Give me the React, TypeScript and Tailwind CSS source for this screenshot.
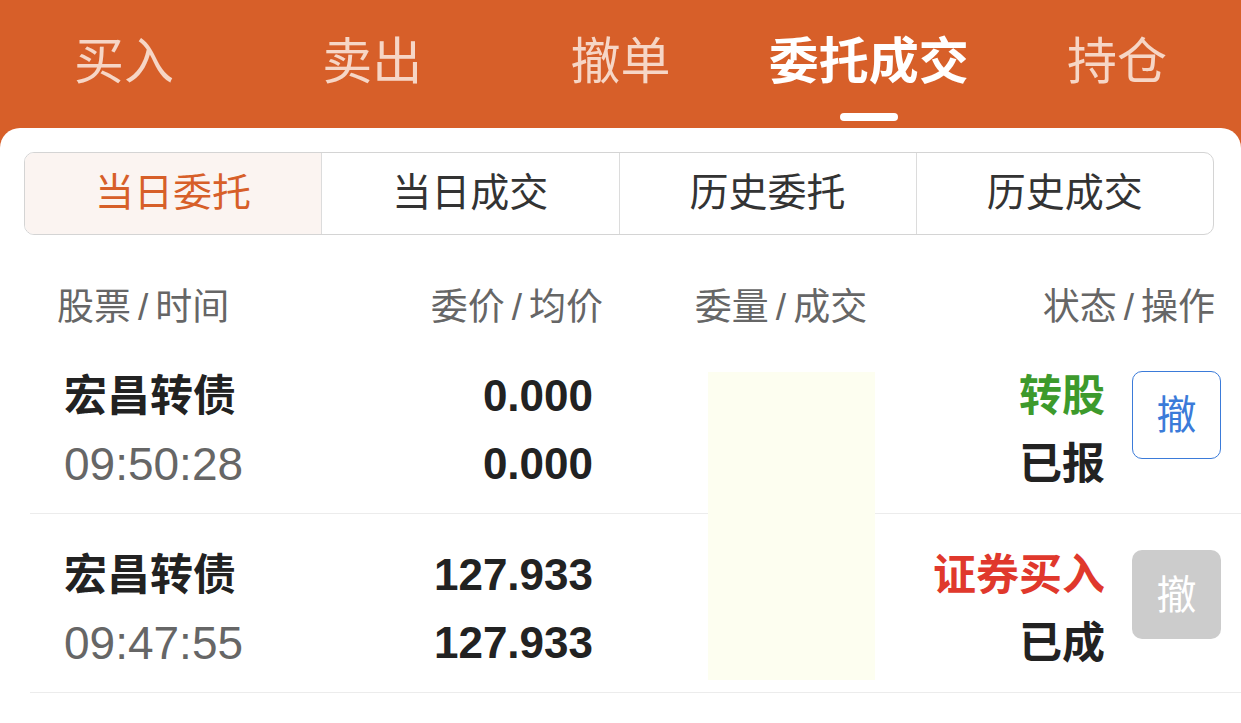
import React from 'react';

const topTabs = ['买入', '卖出', '撤单', '委托成交', '持仓'];
const subTabs = ['当日委托', '当日成交', '历史委托', '历史成交'];

interface Order {
    name: string;
    time: string;
    price: string;
    avg: string;
    kind: string;
    kindColor: string;
    status: string;
    cancellable: boolean;
}

const orders: Order[] = [
    { name: '宏昌转债', time: '09:50:28', price: '0.000', avg: '0.000', kind: '转股', kindColor: 'text-[#3d9a2c]', status: '已报', cancellable: true },
    { name: '宏昌转债', time: '09:47:55', price: '127.933', avg: '127.933', kind: '证券买入', kindColor: 'text-[#e0382c]', status: '已成', cancellable: false },
];

function Heading({ a, b }: { a: string; b: string }) {
    return (
        <>
            {a}
            <span className="mx-[7px]">/</span>
            {b}
        </>
    );
}

function OrderRow({ order }: { order: Order }) {
    return (
        <div className="flex h-[179px] border-b border-[#ececec] pl-[34px] pr-[20px]">
            <div className="w-[260px] pt-[27px]">
                <div className="h-[68px] leading-[68px] text-[43px] font-bold text-[#222]">{order.name}</div>
                <div className="h-[68px] leading-[68px] text-[46px] text-[#666]">{order.time}</div>
            </div>
            <div className="w-[269px] pt-[27px] text-right font-bold text-[#222]">
                <div className="h-[68px] leading-[68px] text-[44px]">{order.price}</div>
                <div className="h-[68px] leading-[68px] text-[44px]">{order.avg}</div>
            </div>
            <div className="flex-1 pt-[27px] text-right font-bold">
                <div className={`h-[68px] leading-[68px] text-[43px] ${order.kindColor}`}>{order.kind}</div>
                <div className="h-[68px] leading-[68px] text-[43px] text-[#222]">{order.status}</div>
            </div>
            <div className="ml-[27px] pt-[36px]">
                {order.cancellable ? (
                    <button className="flex h-[88px] w-[89px] items-center justify-center rounded-[10px] border-[1.5px] border-[#3b7bd9] text-[40px] text-[#3b7bd9]">
                        撤
                    </button>
                ) : (
                    <button className="flex h-[89px] w-[89px] items-center justify-center rounded-[10px] bg-[#cccccc] text-[40px] text-white">
                        撤
                    </button>
                )}
            </div>
        </div>
    );
}

export default function App() {
    return (
        <div className="h-[723px] w-[1241px] overflow-hidden bg-[#d75f29] font-['Liberation_Sans','Noto_Sans_CJK_SC',sans-serif]">
            {/* Top tabs */}
            <div className="flex h-[128px]">
                {topTabs.map((t, i) => {
                    const active = i === 3;
                    return (
                        <div key={t} className="flex flex-1 flex-col items-center">
                            <div className={`mt-[32px] h-[60px] leading-[60px] text-[50px] ${active ? 'font-bold text-white' : 'text-[#f6d6c6]'}`}>
                                {t}
                            </div>
                            {active && <div className="mt-[21px] h-[8px] w-[58px] rounded-full bg-white" />}
                        </div>
                    );
                })}
            </div>

            {/* Panel */}
            <div className="h-[595px] rounded-t-[20px] bg-white pt-[24px]">
                <div className="ml-[24px] mr-[27px] flex h-[83px] overflow-hidden rounded-[10px] border border-[#d4d4d4]">
                    {subTabs.map((t, i) => (
                        <div
                            key={t}
                            className={`flex flex-1 items-center justify-center text-[39px] ${i > 0 ? 'border-l border-[#dcdcdc]' : ''} ${i === 0 ? 'bg-[#fbf4f1] text-[#d75f29]' : 'text-[#333]'}`}
                        >
                            {t}
                        </div>
                    ))}
                </div>

                {/* Column headings */}
                <div className="mt-[44px] flex h-[58px] items-center text-[37px] text-[#666]">
                    <div className="w-[300px] pl-[57px]"><Heading a="股票" b="时间" /></div>
                    <div className="w-[303px] text-right"><Heading a="委价" b="均价" /></div>
                    <div className="w-[356px] text-center"><Heading a="委量" b="成交" /></div>
                    <div className="flex-1 pr-[26px] text-right"><Heading a="状态" b="操作" /></div>
                </div>

                {/* Orders */}
                <div className="relative -mt-[2px] ml-[30px]">
                    {orders.map((o, i) => (
                        <OrderRow key={i} order={o} />
                    ))}
                    {/* masked quantity column */}
                    <div className="absolute left-[678px] top-[37px] h-[308px] w-[167px] bg-[#fdfef0]" />
                </div>
            </div>
        </div>
    );
}
